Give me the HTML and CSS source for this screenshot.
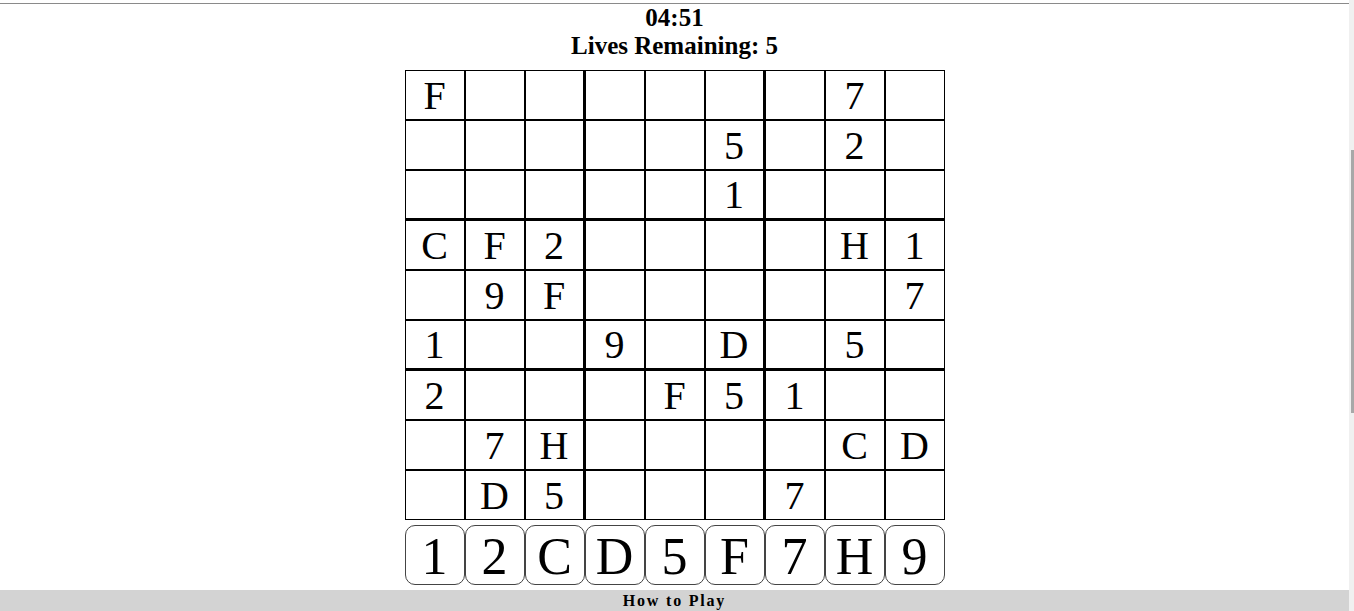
FILE: index.html
```html
<!DOCTYPE html>
<html>
<head>
<meta charset="utf-8">
<link rel="stylesheet" href="styles.css">
</head>
<body>
<div class="page">
  <div class="topline"></div>
  <div class="status">
    <div class="timer">04:51</div>
    <div class="lives">Lives Remaining: 5</div>
  </div>
  <div class="board">
    <div class="cell">F</div><div class="cell"></div><div class="cell c3"></div><div class="cell"></div><div class="cell"></div><div class="cell c3"></div><div class="cell"></div><div class="cell">7</div><div class="cell"></div>
    <div class="cell"></div><div class="cell"></div><div class="cell c3"></div><div class="cell"></div><div class="cell"></div><div class="cell c3">5</div><div class="cell"></div><div class="cell">2</div><div class="cell"></div>
    <div class="cell r3"></div><div class="cell r3"></div><div class="cell r3 c3"></div><div class="cell r3"></div><div class="cell r3"></div><div class="cell r3 c3">1</div><div class="cell r3"></div><div class="cell r3"></div><div class="cell r3"></div>
    <div class="cell">C</div><div class="cell">F</div><div class="cell c3">2</div><div class="cell"></div><div class="cell"></div><div class="cell c3"></div><div class="cell"></div><div class="cell">H</div><div class="cell">1</div>
    <div class="cell"></div><div class="cell">9</div><div class="cell c3">F</div><div class="cell"></div><div class="cell"></div><div class="cell c3"></div><div class="cell"></div><div class="cell"></div><div class="cell">7</div>
    <div class="cell r3">1</div><div class="cell r3"></div><div class="cell r3 c3"></div><div class="cell r3">9</div><div class="cell r3"></div><div class="cell r3 c3">D</div><div class="cell r3"></div><div class="cell r3">5</div><div class="cell r3"></div>
    <div class="cell">2</div><div class="cell"></div><div class="cell c3"></div><div class="cell"></div><div class="cell">F</div><div class="cell c3">5</div><div class="cell">1</div><div class="cell"></div><div class="cell"></div>
    <div class="cell"></div><div class="cell">7</div><div class="cell c3">H</div><div class="cell"></div><div class="cell"></div><div class="cell c3"></div><div class="cell"></div><div class="cell">C</div><div class="cell">D</div>
    <div class="cell"></div><div class="cell">D</div><div class="cell c3">5</div><div class="cell"></div><div class="cell"></div><div class="cell c3"></div><div class="cell">7</div><div class="cell"></div><div class="cell"></div>
  </div>
  <div class="keys">
    <button class="key">1</button><button class="key">2</button><button class="key">C</button><button class="key">D</button><button class="key">5</button><button class="key">F</button><button class="key">7</button><button class="key">H</button><button class="key">9</button>
  </div>
  <div class="footer">How to Play</div>
</div>
<div class="scrollbar"><div class="thumb"></div></div>
</body>
</html>
```
FILE: styles.css
```css
html, body {
  margin: 0;
  padding: 0;
  height: 611px;
  overflow: hidden;
}
body {
  display: flex;
  flex-direction: row;
  background: #ffffff;
  font-family: "Liberation Serif", "Times New Roman", serif;
  color: #000;
}
.page {
  flex: 1;
  display: flex;
  flex-direction: column;
  align-items: center;
  min-width: 0;
  height: 611px;
  overflow: hidden;
}
.page > * {
  flex-shrink: 0;
}
.topline {
  align-self: stretch;
  height: 3px;
  border-bottom: 1px solid #8a8a8a;
}
.status {
  font-size: 25px;
  font-weight: bold;
  text-align: center;
  line-height: 27.6px;
}
.board {
  margin-top: 11px;
  display: grid;
  grid-template-columns: repeat(9, 60px);
  grid-template-rows: repeat(9, 50px);
}
.cell {
  box-sizing: border-box;
  border: 1px solid #000;
  font-size: 40px;
  display: flex;
  align-items: center;
  justify-content: center;
  line-height: 1;
  padding-top: 1px;
}
.cell.c3 {
  border-right-width: 2px;
}
.cell.r3 {
  border-bottom-width: 2px;
}
.keys {
  margin-top: 5px;
  display: flex;
}
.key {
  box-sizing: border-box;
  width: 60px;
  height: 60px;
  padding: 3px 0 0 0;
  margin: 0;
  border: 1px solid #444;
  border-radius: 10px;
  background: #fff;
  color: #000;
  font-family: "Liberation Serif", "Times New Roman", serif;
  font-size: 52px;
  line-height: 1;
  display: flex;
  align-items: center;
  justify-content: center;
}
.footer {
  margin-top: 5px;
  align-self: stretch;
  height: 21px;
  background: #d3d3d3;
  text-align: center;
  font-weight: bold;
  font-size: 16px;
  letter-spacing: 1.8px;
  line-height: 21px;
}
.scrollbar {
  width: 5px;
  flex: none;
  background: #f0f0f0;
  display: flex;
  flex-direction: column;
  align-items: flex-end;
}
.thumb {
  margin-top: 150px;
  width: 3px;
  height: 263px;
  background: #a8a8a8;
}
```
